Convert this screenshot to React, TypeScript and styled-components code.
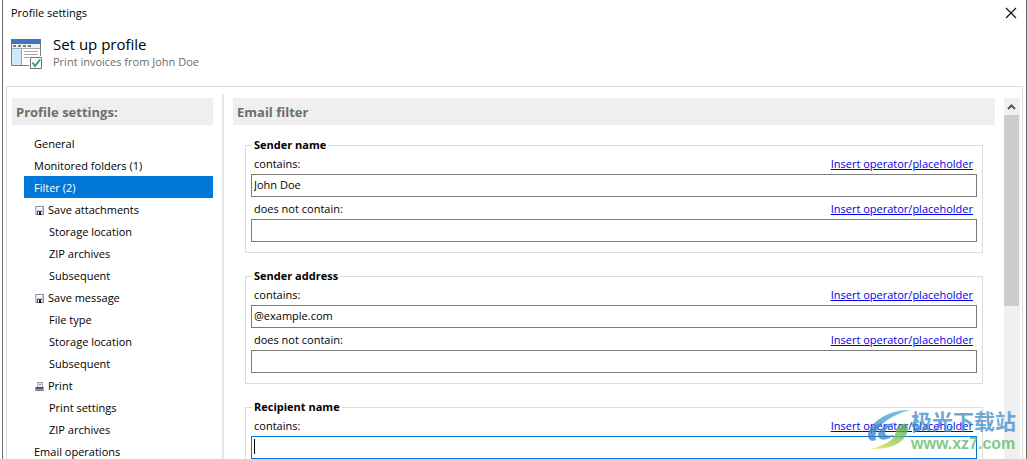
import React from "react";
import styled, { createGlobalStyle, css } from "styled-components";

const GlobalStyle = createGlobalStyle`
  *, *::before, *::after { box-sizing: border-box; }
  body {
    margin: 0;
    background: #fff;
    color: #000;
    font: 11px/16px "Open Sans", "Noto Sans CJK SC", sans-serif;
  }
  button, input { font: inherit; color: inherit; }
`;

const Dialog = styled.main`
  position: relative;
  display: flex;
  flex-direction: column;
  height: 100vh;
  margin-left: 2px;
  border: solid #6a6a6a;
  border-width: 0 1px;
  overflow: hidden;
`;

const TitleBar = styled.header`
  display: flex;
  justify-content: space-between;
  align-items: center;
  height: 26px;
  padding: 0 9px 0 8px;
`;

const CloseButton = styled.button`
  display: flex;
  padding: 0;
  border: 0;
  background: none;
`;

const Intro = styled.section`
  display: flex;
  gap: 10px;
  height: 60px;
  padding: 9px 8px 0;
`;

const IntroIcon = styled.svg`
  margin-top: 4px;
`;

const IntroTitle = styled.h1`
  margin: 0 0 1px;
  font-size: 15px;
  font-weight: 400;
  line-height: 18px;
`;

const IntroText = styled.p`
  margin: 0;
  color: #6d6d6d;
`;

const Body = styled.div`
  display: flex;
  flex: 1;
  min-height: 0;
  margin: 0 3px;
  padding: 0 2px 0 5px;
  border: solid #dcdcdc;
  border-width: 1px 1px 0;
`;

const Sidebar = styled.nav`
  flex: none;
  width: 201px;
  padding-top: 11px;
  overflow: hidden;
`;

const Divider = styled.div`
  flex: none;
  width: 2px;
  margin: 7px 9px 0;
  background: #e6e6e6;
`;

const SectionTitle = styled.h2`
  margin: 0;
  padding: 2px 4px 0;
  background: #efefef;
  color: #6d6d6d;
  font-size: 13px;
  font-weight: 700;
  line-height: 25px;
`;

const NavList = styled.ul`
  margin: 7px 0 0 12px;
  padding: 0;
  list-style: none;
`;

const NavItem = styled.button<{ $selected?: boolean; $nested?: boolean }>`
  display: flex;
  align-items: center;
  gap: 3px;
  width: 100%;
  height: 22px;
  padding: 2px 0 0 ${(p) => (p.$nested ? 25 : 10)}px;
  border: 0;
  background: ${(p) => (p.$selected ? "#0078d7" : "none")};
  color: ${(p) => (p.$selected ? "#fff" : "#000")};
  text-align: left;
`;

const Content = styled.section`
  flex: 1;
  min-width: 0;
  padding-top: 11px;
  overflow: hidden;
`;

const Groups = styled.div`
  display: flex;
  flex-direction: column;
  gap: 15px;
  padding: 12px 12px 0;
`;

const Group = styled.fieldset`
  min-width: 0;
  margin: 0;
  padding: 0 5px 10px;
  border: 1px solid #dcdcdc;
`;

const GroupTitle = styled.legend`
  margin-left: 1px;
  padding: 0 2px 1px;
  font-weight: 700;
  line-height: 16px;
`;

const FieldHead = styled.div`
  display: flex;
  justify-content: space-between;
  padding: 0 4px 1px 3px;
  line-height: 19px;

  input + & { margin-top: 2px; }
`;

const InsertLink = styled.a`
  color: #0000ee;
  text-decoration: underline;
`;

const TextBox = styled.input<{ $active?: boolean }>`
  display: block;
  width: 100%;
  height: 23px;
  padding: 0 2px 2px;
  border: 1px solid #7a7a7a;
  outline: 0;
  background: #fff;
  ${(p) =>
    p.$active &&
    css`
      border-color: #0078d7;
      background: linear-gradient(#000, #000) 2px 2px / 1px 15px no-repeat #fff;
    `}
`;

const ScrollTrack = styled.div`
  flex: none;
  width: 16px;
  margin: 11px 0 0 9px;
  background: #f0f0f0;
`;

const ScrollUp = styled.button`
  display: flex;
  justify-content: center;
  align-items: center;
  width: 15px;
  height: 17px;
  padding: 0;
  border: 0;
  background: none;
`;

const ScrollThumb = styled.div`
  width: 15px;
  height: 191px;
  background: #cdcdcd;
`;

const Watermark = styled.div`
  position: absolute;
  right: 10px;
  bottom: 5px;
  display: flex;
  align-items: flex-end;
  opacity: 0.75;
  pointer-events: none;
`;

const WatermarkName = styled.div`
  color: #3b8ccb;
  font: 700 21px/28px "Noto Sans CJK SC", sans-serif;
`;

const WatermarkUrl = styled.div`
  color: #58b862;
  font: 700 16px/20px "Liberation Sans", sans-serif;
`;

const SaveIcon = () => (
  <svg width="11" height="11" viewBox="0 0 11 11" aria-hidden="true">
    <path d="M1 1h9v9H1z" fill="#8f90a8" />
    <path d="M2 2h7v7H2z" fill="#c9cede" />
    <path d="M3 2h5v3H3z" fill="#fff" />
    <path d="M3 6h5v4H3z" fill="#555" />
    <path d="M4 7h1v2H4zM7 7h1v2H7z" fill="#fff" />
    <path d="M5 7h2v3H5z" fill="#111" />
    <path d="M1 1h1v9H1z" fill="#cbb98f" />
  </svg>
);

const PrintIcon = () => (
  <svg width="11" height="11" viewBox="0 0 11 11" aria-hidden="true">
    <path d="M3 1h6v5H3z" fill="#8fb4cc" />
    <path d="M4 2h4v4H4z" fill="#dfe7f2" />
    <path d="M3 1h1v5H3z" fill="#e09a8c" />
    <path d="M4 1h4v1H4zM5 3h2v1H5z" fill="#8795ad" />
    <path d="M1 6h9v4H1z" fill="#a2a2a8" />
    <path d="M2 6h7v2H2z" fill="#55555c" />
    <path d="M2 9h7v1H2z" fill="#77777d" />
  </svg>
);

type Item = {
  label: string;
  nested?: boolean;
  selected?: boolean;
  icon?: React.ReactNode;
};

const items: Item[] = [
  { label: "General" },
  { label: "Monitored folders (1)" },
  { label: "Filter (2)", selected: true },
  { label: "Save attachments", icon: <SaveIcon /> },
  { label: "Storage location", nested: true },
  { label: "ZIP archives", nested: true },
  { label: "Subsequent", nested: true },
  { label: "Save message", icon: <SaveIcon /> },
  { label: "File type", nested: true },
  { label: "Storage location", nested: true },
  { label: "Subsequent", nested: true },
  { label: "Print", icon: <PrintIcon /> },
  { label: "Print settings", nested: true },
  { label: "ZIP archives", nested: true },
  { label: "Email operations" },
];

const groups = [
  { id: "sender-name", title: "Sender name", value: "John Doe" },
  { id: "sender-address", title: "Sender address", value: "@example.com" },
  { id: "recipient-name", title: "Recipient name", value: "", active: true },
];

type FieldProps = { id: string; label: string; value?: string; active?: boolean };

const Field = ({ id, label, value = "", active }: FieldProps) => (
  <>
    <FieldHead>
      <label htmlFor={id}>{label}</label>
      <InsertLink href="#">Insert operator/placeholder</InsertLink>
    </FieldHead>
    <TextBox id={id} type="text" defaultValue={value} $active={active} />
  </>
);

export default function App() {
  return (
    <>
      <GlobalStyle />
      <Dialog>
        <TitleBar>
          <span>Profile settings</span>
          <CloseButton aria-label="Close">
            <svg width="12" height="12" viewBox="0 0 12 12">
              <path d="M1 1l10 10M11 1L1 11" stroke="#111" strokeWidth="1.2" />
            </svg>
          </CloseButton>
        </TitleBar>
        <Intro>
          <IntroIcon width="32" height="32" viewBox="0 0 32 32" aria-hidden="true">
            <path d="M.5.5h29v26H.5z" fill="#fff" stroke="#7b7b7b" />
            <path d="M0 0h30v5H0z" fill="#3c78b8" />
            <path d="M1 5h28v4H1z" fill="#f2f2f2" />
            <path d="M2 6h3v2H2zM7 6h3v2H7zM12 6h3v2h-3zM17 6h3v2h-3z" fill="#7b7b7b" />
            <path d="M1 9h28v1H1z" fill="#a8a8a8" />
            <path d="M1 10h9v16H1z" fill="#cdeafc" />
            <path d="M10 10h1v16h-1z" fill="#a0a0a0" />
            <path d="M13 12h14v1H13zM13 15h14v1H13zM13 18h6v1h-6z" fill="#a8a8a8" />
            <path d="M18 17h14v14H18z" fill="#fff" />
            <path d="M19.500 18.500h11v11h-11z" fill="#fff" stroke="#6f6f6f" />
            <path d="M21.500 23.500l2.500 3.500 5-6.500" fill="none" stroke="#2fa374" strokeWidth="2" />
          </IntroIcon>
          <div>
            <IntroTitle>Set up profile</IntroTitle>
            <IntroText>Print invoices from John Doe</IntroText>
          </div>
        </Intro>
        <Body>
          <Sidebar>
            <SectionTitle>Profile settings:</SectionTitle>
            <NavList>
              {items.map((item, i) => (
                <li key={i}>
                  <NavItem $nested={item.nested} $selected={item.selected}>
                    {item.icon}
                    {item.label}
                  </NavItem>
                </li>
              ))}
            </NavList>
          </Sidebar>
          <Divider />
          <Content>
            <SectionTitle>Email filter</SectionTitle>
            <Groups>
              {groups.map((g) => (
                <Group key={g.id}>
                  <GroupTitle>{g.title}</GroupTitle>
                  <Field id={`${g.id}-has`} label="contains:" value={g.value} active={g.active} />
                  <Field id={`${g.id}-not`} label="does not contain:" />
                </Group>
              ))}
            </Groups>
          </Content>
          <ScrollTrack>
            <ScrollUp aria-label="Scroll up">
              <svg width="9" height="6" viewBox="0 0 9 6">
                <path d="M1 5l3.500-3.500L8 5" fill="none" stroke="#555" strokeWidth="2" />
              </svg>
            </ScrollUp>
            <ScrollThumb />
          </ScrollTrack>
        </Body>
        <Watermark>
          <svg width="44" height="44" viewBox="0 0 44 44" aria-hidden="true">
            <defs>
              <linearGradient id="sky" x1="0" y1="1" x2="1" y2="0">
                <stop offset="0" stopColor="#2f74bd" />
                <stop offset="1" stopColor="#55b4e6" />
              </linearGradient>
              <linearGradient id="leaf" x1="0" y1="1" x2="1" y2="0">
                <stop offset="0" stopColor="#f3e04a" />
                <stop offset="1" stopColor="#35a853" />
              </linearGradient>
            </defs>
            <path d="M43 0C26-1 3 10 1 25c0 5 4 7 8 5-3-8 6-22 34-30z" fill="url(#sky)" />
            <path d="M27 13c-9 1-17 7-16 13 1 5 10 5 16-1-5 1-9 1-9-2 0-4 5-7 9-10z" fill="#3b82c4" />
            <path d="M40 14c4 10-6 26-36 25 15-4 25-10 25-19 1-4 6-7 11-6z" fill="url(#leaf)" />
          </svg>
          <div>
            <WatermarkName>极光下载站</WatermarkName>
            <WatermarkUrl>www.xz7.com</WatermarkUrl>
          </div>
        </Watermark>
      </Dialog>
    </>
  );
}
